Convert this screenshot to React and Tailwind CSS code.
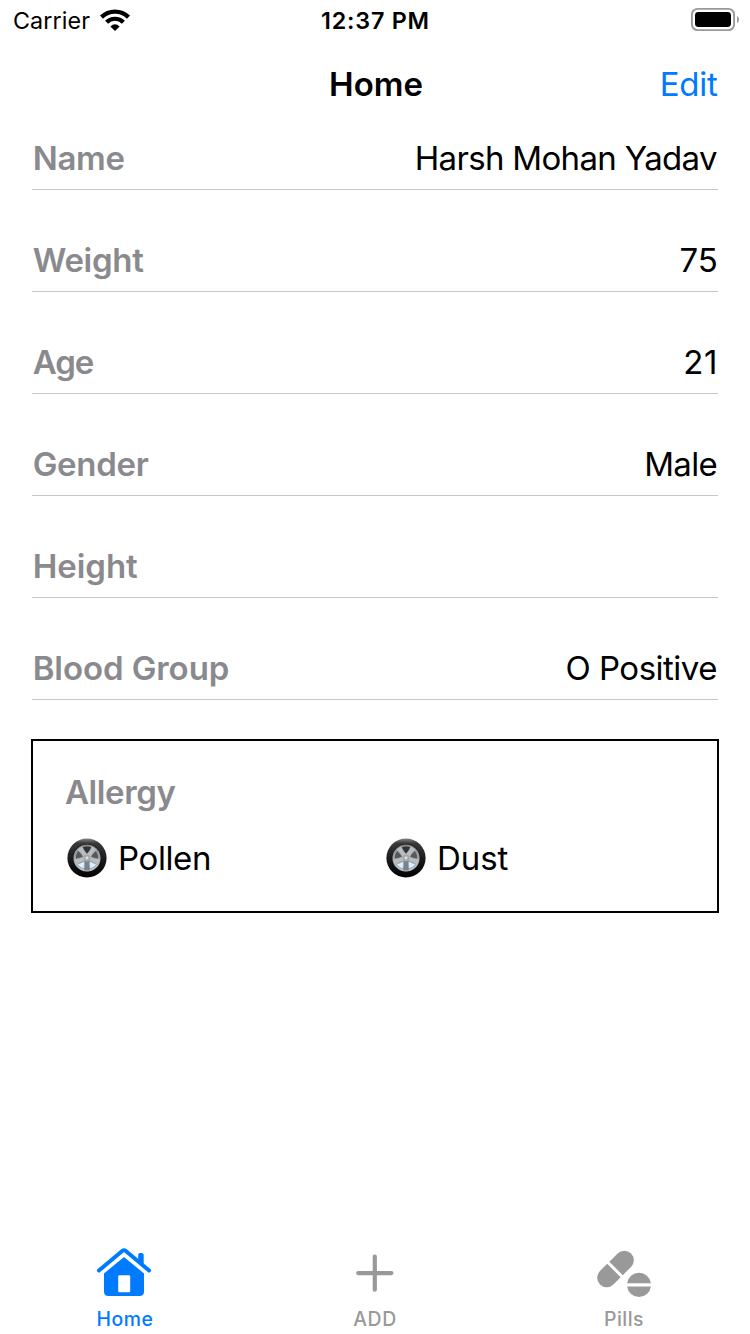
const rows = [
  { label: "Name", value: "Harsh Mohan Yadav", labelClass: "tracking-[-0.3px]", valueClass: "pr-[1.2px] tracking-[-0.67px]" },
  { label: "Weight", value: "75", labelClass: "tracking-[-0.3px]", valueClass: "pr-[0.4px] tracking-[-0.1px]" },
  { label: "Age", value: "21", labelClass: "tracking-[-1px]", valueClass: "tracking-[0.6px]" },
  { label: "Gender", value: "Male", labelClass: "tracking-[-0.3px]", valueClass: "pr-px tracking-[-0.7px]" },
  { label: "Height", value: "", labelClass: "tracking-[-0.05px]", valueClass: "" },
  { label: "Blood Group", value: "O Positive", labelClass: "tracking-[-0.08px]", valueClass: "pr-px tracking-[-0.5px]" },
];

const allergies = [
  { name: "Pollen", className: "tracking-[-0.4px]" },
  { name: "Dust", className: "tracking-[-0.1px]" },
];

function WifiIcon() {
  return (
    <svg className="h-[23px] w-[30px]" viewBox="0 0 30 23" fill="none">
      <path d="M1.5 8.1 A19.2 19.2 0 0 1 28.5 8.1" stroke="#000" strokeWidth="4.3" />
      <path d="M6.6 13.3 A11.7 11.7 0 0 1 23.4 13.3" stroke="#000" strokeWidth="4.2" />
      <path d="M10.4 17.5 Q15 13.2 19.6 17.5 L15 22.1 Z" fill="#000" />
    </svg>
  );
}

function BatteryIcon() {
  return (
    <svg className="h-[24px] w-[50px]" viewBox="0 0 50 24" fill="none">
      <rect x="1.9" y="1.9" width="42.2" height="21.2" rx="5.6" stroke="#999" strokeWidth="1.9" />
      <rect x="5" y="5" width="36" height="15" rx="3.4" fill="#000" />
      <path d="M47 9 Q49 9.8 49 12.4 Q49 15 47 16 Z" fill="#999" />
    </svg>
  );
}

function WheelIcon() {
  return (
    <svg className="size-[40px] shrink-0" viewBox="0 0 40 40">
      <defs>
        <linearGradient id="tyre" x1="0" y1="0" x2="0" y2="1">
          <stop offset="0" stopColor="#8a8a8a" />
          <stop offset="0.12" stopColor="#3a3a3a" />
          <stop offset="0.55" stopColor="#191919" />
          <stop offset="1" stopColor="#020202" />
        </linearGradient>
        <linearGradient id="rim" x1="0" y1="0" x2="0" y2="1">
          <stop offset="0" stopColor="#85878a" />
          <stop offset="1" stopColor="#bfc6cc" />
        </linearGradient>
      </defs>
      <circle cx="20" cy="20" r="19.6" fill="url(#tyre)" />
      <circle cx="20" cy="20" r="14" fill="#0b0b0b" />
      <circle cx="20" cy="20" r="12.5" fill="#8b8f93" stroke="url(#rim)" strokeWidth="2.2" />
      <path d="M15.6 9.2 Q20 7.6 24.4 9.2 L20.6 15 H19.4 Z" fill="#303234" />
      {[72, 288].map((a) => (
        <path key={a} transform={`rotate(${a} 20 20)`} d="M15.9 9.6 Q20 8 24.1 9.6 L20.6 15 H19.4 Z" fill="#55595d" />
      ))}
      {[144, 216].map((a) => (
        <path key={a} transform={`rotate(${a} 20 20)`} d="M15.9 9.4 Q20 7.8 24.1 9.4 L20.6 15 H19.4 Z" fill="#e2edf7" stroke="#86a9c9" strokeWidth="0.6" />
      ))}
      {[36, 108, 180, 252, 324].map((a) => (
        <path key={a} transform={`rotate(${a} 20 20)`} d="M17.6 20 L18.2 12.5 L17 7.6 H23 L21.8 12.5 L22.4 20 Z" fill={a === 180 ? "#7d8185" : "#b9bdc0"} />
      ))}
      <circle cx="20" cy="20" r="3.6" fill="#a4a8ab" />
      <circle cx="20" cy="20" r="1.4" fill="#e0e3e5" />
    </svg>
  );
}

function HomeIcon() {
  return (
    <svg className="h-[54px] w-[56px]" viewBox="0 0 56 54" fill="none">
      <path d="M8 25.6 L28 9 L48 25.6 V45.5 Q48 50 43.5 50 H12.5 Q8 50 8 45.5 Z" fill="#007aff" />
      <path d="M2.8 25.6 L26.6 6.2 Q28 5.2 29.4 6.2 L53.2 25.6" stroke="#fff" strokeWidth="9.4" />
      <path d="M2.9 24.6 L26.2 4.9 Q28 3.4 29.8 4.9 L53.1 24.6" stroke="#007aff" strokeWidth="3.9" strokeLinecap="round" />
      <path d="M42.2 15.5 V8.9 Q42.2 7 44 7 H45.8 Q47.7 7 47.7 8.9 V20.5 Z" fill="#007aff" />
      <rect x="22.2" y="29.3" width="12" height="17" rx="1.2" fill="#fff" />
    </svg>
  );
}

function PlusIcon() {
  return (
    <svg className="h-[54px] w-[56px]" viewBox="0 0 56 54" fill="none" stroke="#999" strokeWidth="4.2" strokeLinecap="round">
      <path d="M27.8 10.5 V43.7 M11.2 27.1 H44.4" />
    </svg>
  );
}

function PillsIcon() {
  return (
    <svg className="h-[54px] w-[56px]" viewBox="0 0 56 54">
      <g transform="rotate(-45 19.5 23)">
        <path d="M17.3 13.5 H7 A9.5 9.5 0 0 0 7 32.5 H17.3 Z" fill="#999" />
        <path d="M20.3 13.5 H32 A9.5 9.5 0 0 1 32 32.5 H20.3 Z" fill="#999" />
      </g>
      <path d="M31.1 37.3 A12 12 0 0 1 54.9 37.3 Z" fill="#999" />
      <path d="M31.1 40.5 A12 12 0 0 0 54.9 40.5 Z" fill="#999" />
    </svg>
  );
}

export default function App() {
  return (
    <div className="flex h-[1334px] w-[750px] flex-col bg-white font-[Inter,sans-serif] text-[33px] whitespace-nowrap text-black">
      <header>
        <div className="grid h-[40px] grid-cols-3 text-[23.3px] leading-[41px]">
          <div className="flex pl-[13px]">
            <span className="tracking-[0.1px]">Carrier</span>
            <span className="ml-[9.5px] pt-[9px]"><WifiIcon /></span>
          </div>
          <div className="pl-px text-center font-semibold tracking-[0.8px]">12:37 PM</div>
          <div className="flex justify-end pt-[7px] pr-[10px]"><BatteryIcon /></div>
        </div>
        <nav className="grid h-[88px] grid-cols-3 leading-[88px]">
          <h1 className="col-start-2 pl-[2px] text-center font-semibold">Home</h1>
          <button className="pr-[32.5px] text-right tracking-[-0.25px] text-[#007aff]">Edit</button>
        </nav>
      </header>

      <main className="flex-1 px-[32px]">
        <dl className="flex flex-col gap-10">
          {rows.map((r) => (
            <div key={r.label} className="flex h-[62px] justify-between border-b border-[#c6c6c8] leading-[60px]">
              <dt className={`pl-[0.7px] font-semibold text-[#8a8a8e] ${r.labelClass}`}>{r.label}</dt>
              <dd className={r.valueClass}>{r.value}</dd>
            </div>
          ))}
        </dl>
        <section className="-mx-px mt-[39px] h-[174px] border-2 border-black px-[32px] pt-[18px] leading-[66px]">
          <h2 className="font-semibold tracking-[-0.4px] text-[#8a8a8e]">Allergy</h2>
          <ul className="grid grid-cols-[319px_1fr]">
            {allergies.map((a) => (
              <li key={a.name} className="flex items-center gap-[11.5px] pl-[1.5px]">
                <WheelIcon />
                <span className={a.className}>{a.name}</span>
              </li>
            ))}
          </ul>
        </section>
      </main>

      <footer className="grid h-[88px] grid-cols-[248px_254px_244px] text-[19.4px] leading-[24px] font-medium text-[#999]">
        <div className="flex flex-col items-center gap-[7px] text-[#007aff]">
          <HomeIcon />
          <span className="pl-[2px] tracking-[0.6px]">Home</span>
        </div>
        <div className="flex flex-col items-center gap-[7px]">
          <PlusIcon />
          <span className="tracking-[0.6px]">ADD</span>
        </div>
        <div className="flex flex-col items-center gap-[7px]">
          <PillsIcon />
          <span className="tracking-[0.5px]">Pills</span>
        </div>
      </footer>
    </div>
  );
}
